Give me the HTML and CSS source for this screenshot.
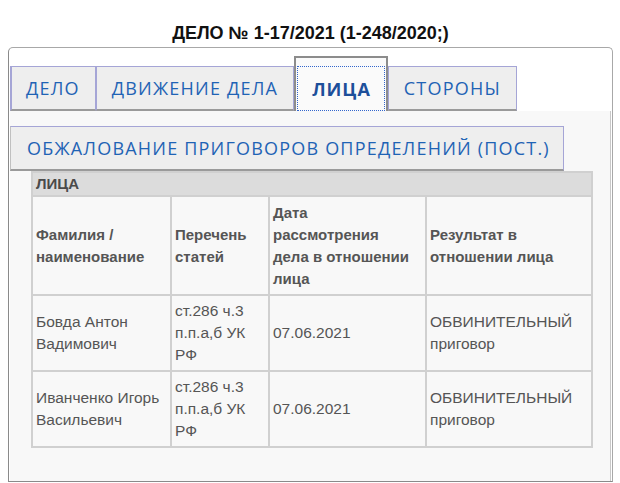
FILE: index.html
```html
<!DOCTYPE html>
<html lang="ru">
<head>
<meta charset="utf-8">
<link rel="stylesheet" href="styles.css">
</head>
<body>
<h1 class="title">ДЕЛО № 1-17/2021 (1-248/2020;)</h1>
<div class="panel">
  <ul class="tabs">
    <li class="tab">ДЕЛО</li>
    <li class="tab">ДВИЖЕНИЕ ДЕЛА</li>
    <li class="tab active"><span class="focus">ЛИЦА</span></li>
    <li class="tab">СТОРОНЫ</li>
  </ul>
  <div class="content">
    <div class="subtab">ОБЖАЛОВАНИЕ ПРИГОВОРОВ ОПРЕДЕЛЕНИЙ (ПОСТ.)</div>
    <table class="grid">
      <colgroup>
        <col class="c1"><col class="c2"><col class="c3"><col class="c4">
      </colgroup>
      <tr><td class="caption" colspan="4">ЛИЦА</td></tr>
      <tr class="head">
        <td>Фамилия /<br>наименование</td>
        <td>Перечень<br>статей</td>
        <td>Дата<br>рассмотрения<br>дела в отношении<br>лица</td>
        <td>Результат в<br>отношении лица</td>
      </tr>
      <tr class="row">
        <td>Бовда Антон<br>Вадимович</td>
        <td>ст.286 ч.3<br>п.п.а,б УК<br>РФ</td>
        <td>07.06.2021</td>
        <td>ОБВИНИТЕЛЬНЫЙ<br>приговор</td>
      </tr>
      <tr class="row">
        <td>Иванченко Игорь<br>Васильевич</td>
        <td>ст.286 ч.3<br>п.п.а,б УК<br>РФ</td>
        <td>07.06.2021</td>
        <td>ОБВИНИТЕЛЬНЫЙ<br>приговор</td>
      </tr>
    </table>
  </div>
</div>
</body>
</html>
```
FILE: styles.css
```css
html, body {
  margin: 0;
  padding: 0;
  background: #ffffff;
}
body {
  padding: 0 7px 0 8px;
  font-family: "Liberation Sans", Arial, sans-serif;
}
.title {
  margin: 0;
  padding-top: 22px;
  height: 25px;
  text-align: center;
  font-size: 18px;
  line-height: 22px;
  font-weight: bold;
  color: #111;
}
.panel {
  border: 1px solid #a8a8a8;
  border-left-color: #8a8a8a;
  border-bottom-color: #8a8a8a;
  border-radius: 5px 5px 0 0;
  background: #fff;
  height: 425px;
  padding: 8px 1px 0 1px;
  display: flex;
  flex-direction: column;
}
.tabs {
  list-style: none;
  margin: 0;
  padding: 0;
  display: flex;
  align-items: flex-end;
  height: 55px;
}
.tab {
  box-sizing: border-box;
  height: 45px;
  padding: 0 15px;
  display: flex;
  align-items: center;
  background: #eeeeee;
  border: 1px solid #a5a5d6;
  border-bottom: 2px solid #9a9a9a;
  color: #1f63b5;
  font-family: "Open Sans", sans-serif;
  font-size: 18px;
  letter-spacing: 1.2px;
}
.tab:first-child {
  border-left-width: 2px;
  padding-left: 14px;
}
.tab.active {
  height: 55px;
  background: #fafafa;
  border: 2px solid #8c8c8c;
  border-bottom: none;
  padding: 8px 1px 0 1px;
  align-items: stretch;
  font-weight: bold;
  color: #1d4f9a;
  letter-spacing: 1px;
}
.focus {
  border: 1px dotted #3366cc;
  display: flex;
  align-items: center;
  padding: 0 13px 0 14px;
}
.content {
  flex: 1;
  background: #f8f8f8;
  border-right: 1px solid #c8c8c8;
  padding-top: 15px;
}
.subtab {
  box-sizing: border-box;
  width: 554px;
  height: 45px;
  padding-left: 16px;
  display: flex;
  align-items: center;
  background: #eeeeee;
  border: 1px solid #a5a5d6;
  border-left: 1px solid #c0c0c0;
  border-bottom: 2px solid #9a9a9a;
  color: #1f63b5;
  font-family: "Open Sans", sans-serif;
  font-size: 18px;
  letter-spacing: 1.2px;
  white-space: nowrap;
}
.grid {
  margin-left: 21px;
  width: 560px;
  border-collapse: collapse;
  table-layout: fixed;
  color: #555;
  font-size: 15.5px;
  line-height: 22px;
}
.c1 { width: 139px; }
.c2 { width: 98px; }
.c3 { width: 157px; }
.c4 { width: 166px; }
.grid td {
  border: 2px solid #d0d0d0;
  padding: 0 2px 0 3px;
  vertical-align: middle;
  background: #f8f8f8;
  white-space: nowrap;
}
.grid .caption {
  background: #dcdcdc;
  font-weight: bold;
  font-size: 15px;
  height: 22px;
  line-height: 20px;
  color: #4a4a4a;
}
.head td {
  height: 97px;
  font-weight: bold;
  font-size: 15px;
}
.row td {
  height: 74px;
}
```
